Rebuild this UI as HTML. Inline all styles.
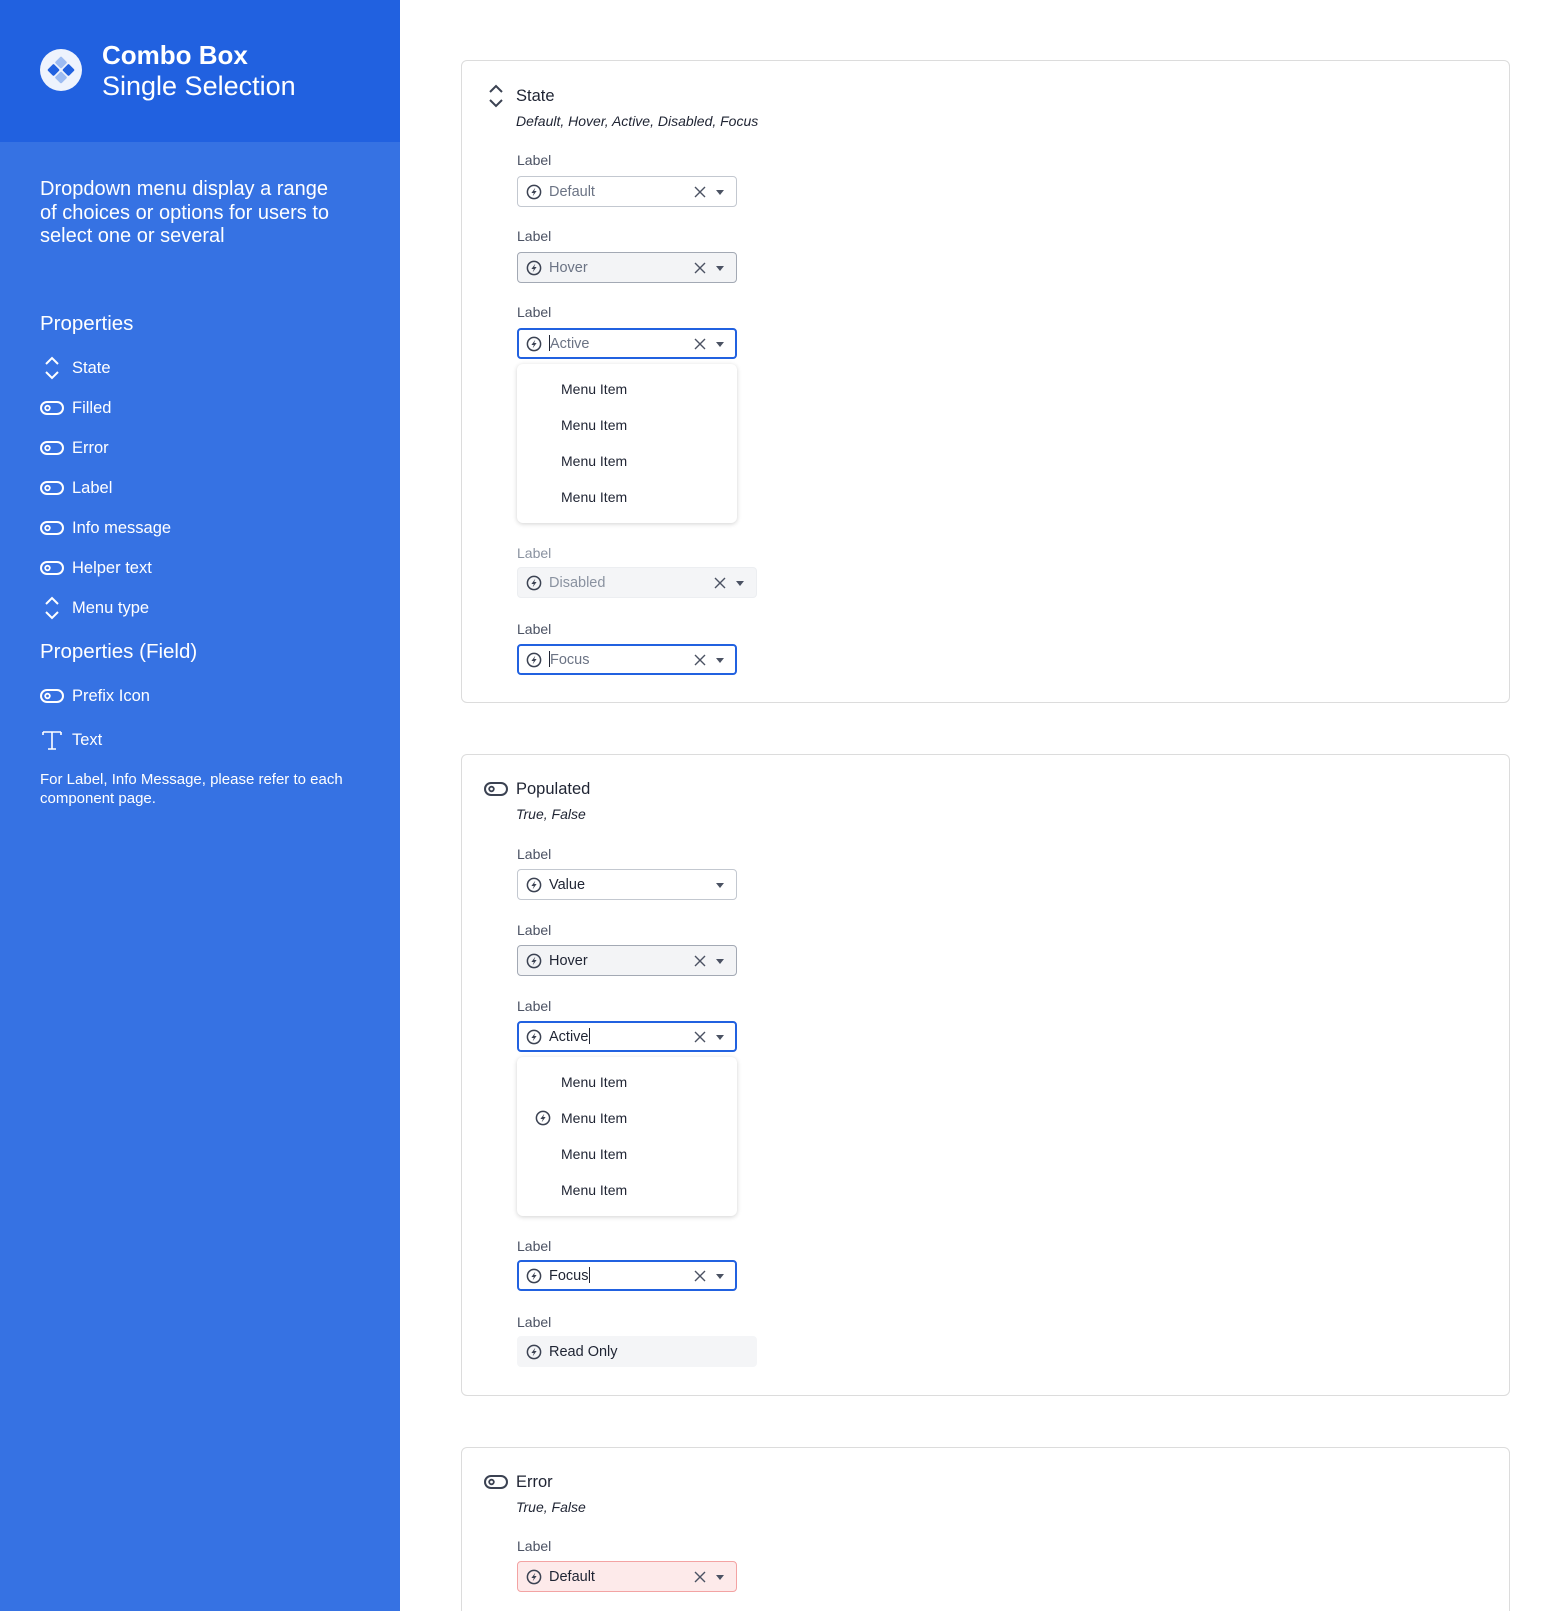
<!DOCTYPE html>
<html><head><meta charset="utf-8"><style>
*{box-sizing:border-box;margin:0;padding:0}
html,body{width:1568px;height:1611px;overflow:hidden}
body{background:#fff;font-family:"Liberation Sans",sans-serif;position:relative;color:#1f2433}
#wrap{position:absolute;left:0;top:0;width:1568px;height:1611px;overflow:hidden}
.a{position:absolute;white-space:nowrap}
#side{position:absolute;left:0;top:0;width:400px;height:1611px;background:#3672E3}
#hd{position:absolute;left:0;top:0;width:400px;height:142px;background:#2161E0}
.si{position:absolute;left:40px;width:24px;height:24px}
.st{position:absolute;left:72px;color:#fff;font-size:16.5px;line-height:20px}
.card{position:absolute;left:461px;width:1049px;border:1.5px solid #dcdcdc;border-radius:6px}
.ttl{position:absolute;left:516px;font-size:16.5px;line-height:20px;color:#1f2433}
.sub{position:absolute;left:516px;font-size:14px;font-style:italic;line-height:18px;color:#1f2433}
.lb{position:absolute;left:517px;font-size:14px;line-height:18px;color:#4b5263}
.f{position:absolute;left:517px;width:220px;height:31px;border:1px solid #c3c8d0;border-radius:4px;background:#fff;color:#1f2433}
.f .ic{position:absolute;left:8px;top:7px;width:16px;height:16px;color:#3b4252}
.f .tx{position:absolute;left:31px;top:1px;line-height:29px;font-size:14.5px}
.f .x{position:absolute;left:176px;top:9px;width:12px;height:12px}
.f .cr{position:absolute;left:198px;top:13px;width:0;height:0;border-left:4.5px solid transparent;border-right:4.5px solid transparent;border-top:5px solid #4b5263}
.f.act{border:2px solid #2161E0}
.f.act .ic{left:7px;top:6px}.f.act .tx{left:30px;top:0;line-height:29px}.f.act .x{left:175px;top:8px}.f.act .cr{left:197px;top:12px}
.f.hov{background:#f3f4f6;border-color:#a3a9b4}
.f.dis{background:#f4f5f7;border-color:#eceef1;width:240px;color:#8a92a0}
.f.dis .x{left:196px}.f.dis .cr{left:218px}
.f.err{background:#fdeaea;border-color:#f3a3a3}
.f.ro{background:#f4f5f7;border-color:#f4f5f7;width:240px}
.ph{color:#6b7384}
.cur{display:inline-block;width:1px;height:16px;background:#1f2433;vertical-align:-3px}
.menu{position:absolute;left:517px;width:220px;height:159px;background:#fff;border-radius:6px;box-shadow:0 1px 5px rgba(0,0,0,.18)}
.mi{position:absolute;left:44px;font-size:14px;line-height:18px;color:#1f2433}
</style></head><body><div id="wrap">
<svg width="0" height="0" style="position:absolute"><defs>
<symbol id="bolt" viewBox="0 0 16 16"><circle cx="8" cy="8" r="6.6" fill="none" stroke="currentColor" stroke-width="1.5"/><path d="M9.3 3.8L5.4 9H7.8L6.7 12.2L10.6 7H8.2Z" fill="currentColor"/></symbol>
<symbol id="xx" viewBox="0 0 12 12"><path d="M1 1L11 11M11 1L1 11" stroke="#4b5263" stroke-width="1.4" fill="none"/></symbol>
<symbol id="chev" viewBox="0 0 24 24"><path d="M6 8l6-6 6 6M6 16l6 6 6-6" stroke="currentColor" stroke-width="2" fill="none"/></symbol>
<symbol id="tog" viewBox="0 0 24 24"><rect x="1" y="6" width="22" height="12" rx="6" stroke="currentColor" stroke-width="2" fill="none"/><circle cx="7.5" cy="12" r="2.3" stroke="currentColor" stroke-width="1.8" fill="none"/></symbol>
<symbol id="tt" viewBox="0 0 24 24"><path d="M3 4H21M3 4V7M21 4V7M12 4V21M8 21H16" stroke="currentColor" stroke-width="1.6" fill="none"/></symbol>
</defs></svg>

<div id="side"></div>
<div id="hd"></div>
<svg class="a" style="left:39px;top:48px" width="44" height="44" viewBox="0 0 44 44"><circle cx="22" cy="22" r="21" fill="#EEF3FD"/><rect x="17.5" y="10" width="9" height="9" rx="1.5" transform="rotate(45 22 14.5)" fill="#9DBCF2"/><rect x="17.5" y="25" width="9" height="9" rx="1.5" transform="rotate(45 22 29.5)" fill="#9DBCF2"/><rect x="10" y="17.5" width="9" height="9" rx="1.5" transform="rotate(45 14.5 22)" fill="#2161E0"/><rect x="25" y="17.5" width="9" height="9" rx="1.5" transform="rotate(45 29.5 22)" fill="#2161E0"/></svg>
<div class="a" style="left:102px;top:40px;color:#fff;font-size:26px;font-weight:bold;line-height:30px">Combo Box</div>
<div class="a" style="left:102px;top:70px;color:#fff;font-size:27px;line-height:32px;font-weight:300">Single Selection</div>
<div class="a" style="left:40px;top:178px;color:#fff;font-size:20px;line-height:23.6px">Dropdown menu display a range<br>of choices or options for users to<br>select one or several</div>
<div class="a" style="left:40px;top:312px;color:#fff;font-size:20.5px;line-height:24px">Properties</div>
<svg class="si" style="top:356px;color:#fff"><use href="#chev"/></svg><div class="st" style="top:358px">State</div>
<svg class="si" style="top:396px;color:#fff"><use href="#tog"/></svg><div class="st" style="top:398px">Filled</div>
<svg class="si" style="top:436px;color:#fff"><use href="#tog"/></svg><div class="st" style="top:438px">Error</div>
<svg class="si" style="top:476px;color:#fff"><use href="#tog"/></svg><div class="st" style="top:478px">Label</div>
<svg class="si" style="top:516px;color:#fff"><use href="#tog"/></svg><div class="st" style="top:518px">Info message</div>
<svg class="si" style="top:556px;color:#fff"><use href="#tog"/></svg><div class="st" style="top:558px">Helper text</div>
<svg class="si" style="top:596px;color:#fff"><use href="#chev"/></svg><div class="st" style="top:598px">Menu type</div>
<div class="a" style="left:40px;top:640px;color:#fff;font-size:20.5px;line-height:24px">Properties (Field)</div>
<svg class="si" style="top:684px;color:#fff"><use href="#tog"/></svg><div class="st" style="top:686px">Prefix Icon</div>
<svg class="si" style="top:728px;color:#fff"><use href="#tt"/></svg><div class="st" style="top:730px">Text</div>
<div class="a" style="left:40px;top:771px;color:#fff;font-size:15px;line-height:18.5px;white-space:normal;width:340px">For Label, Info Message, please refer to each component page.</div>

<div class="card" style="top:60px;height:643px"></div>
<svg class="a" style="left:484px;top:84px;color:#3b4252" width="24" height="24"><use href="#chev"/></svg>
<div class="ttl" style="top:86px">State</div>
<div class="sub" style="top:112px">Default, Hover, Active, Disabled, Focus</div>

<div class="lb" style="top:151px">Label</div>
<div class="f" style="top:176px"><svg class="ic"><use href="#bolt"/></svg><div class="tx ph">Default</div><svg class="x"><use href="#xx"/></svg><div class="cr"></div></div>
<div class="lb" style="top:227px">Label</div>
<div class="f hov" style="top:252px"><svg class="ic"><use href="#bolt"/></svg><div class="tx ph">Hover</div><svg class="x"><use href="#xx"/></svg><div class="cr"></div></div>
<div class="lb" style="top:303px">Label</div>
<div class="f act" style="top:328px"><svg class="ic"><use href="#bolt"/></svg><div class="tx ph"><span class="cur"></span>Active</div><svg class="x"><use href="#xx"/></svg><div class="cr"></div></div>
<div class="menu" style="top:364px"><div class="mi" style="top:16px">Menu Item</div><div class="mi" style="top:52px">Menu Item</div><div class="mi" style="top:88px">Menu Item</div><div class="mi" style="top:124px">Menu Item</div></div>
<div class="lb" style="top:544px;color:#8a92a0">Label</div>
<div class="f dis" style="top:567px"><svg class="ic"><use href="#bolt"/></svg><div class="tx">Disabled</div><svg class="x"><use href="#xx"/></svg><div class="cr"></div></div>
<div class="lb" style="top:620px">Label</div>
<div class="f act" style="top:644px"><svg class="ic"><use href="#bolt"/></svg><div class="tx ph"><span class="cur"></span>Focus</div><svg class="x"><use href="#xx"/></svg><div class="cr"></div></div>

<div class="card" style="top:754px;height:642px"></div>
<svg class="a" style="left:484px;top:777px;color:#3b4252" width="24" height="24"><use href="#tog"/></svg>
<div class="ttl" style="top:779px">Populated</div>
<div class="sub" style="top:805px">True, False</div>
<div class="lb" style="top:845px">Label</div>
<div class="f" style="top:869px"><svg class="ic"><use href="#bolt"/></svg><div class="tx">Value</div><div class="cr"></div></div>
<div class="lb" style="top:921px">Label</div>
<div class="f hov" style="top:945px"><svg class="ic"><use href="#bolt"/></svg><div class="tx">Hover</div><svg class="x"><use href="#xx"/></svg><div class="cr"></div></div>
<div class="lb" style="top:997px">Label</div>
<div class="f act" style="top:1021px"><svg class="ic"><use href="#bolt"/></svg><div class="tx">Active<span class="cur"></span></div><svg class="x"><use href="#xx"/></svg><div class="cr"></div></div>
<div class="menu" style="top:1057px"><div class="mi" style="top:16px">Menu Item</div><svg class="a" style="left:18px;top:53px;width:16px;height:16px;color:#3b4252"><use href="#bolt"/></svg><div class="mi" style="top:52px">Menu Item</div><div class="mi" style="top:88px">Menu Item</div><div class="mi" style="top:124px">Menu Item</div></div>
<div class="lb" style="top:1237px">Label</div>
<div class="f act" style="top:1260px"><svg class="ic"><use href="#bolt"/></svg><div class="tx">Focus<span class="cur"></span></div><svg class="x"><use href="#xx"/></svg><div class="cr"></div></div>
<div class="lb" style="top:1313px">Label</div>
<div class="f ro" style="top:1336px"><svg class="ic"><use href="#bolt"/></svg><div class="tx">Read Only</div></div>

<div class="card" style="top:1447px;height:200px"></div>
<svg class="a" style="left:484px;top:1470px;color:#3b4252" width="24" height="24"><use href="#tog"/></svg>
<div class="ttl" style="top:1472px">Error</div>
<div class="sub" style="top:1498px">True, False</div>
<div class="lb" style="top:1537px">Label</div>
<div class="f err" style="top:1561px"><svg class="ic"><use href="#bolt"/></svg><div class="tx">Default</div><svg class="x"><use href="#xx"/></svg><div class="cr"></div></div>
</div></body></html>
